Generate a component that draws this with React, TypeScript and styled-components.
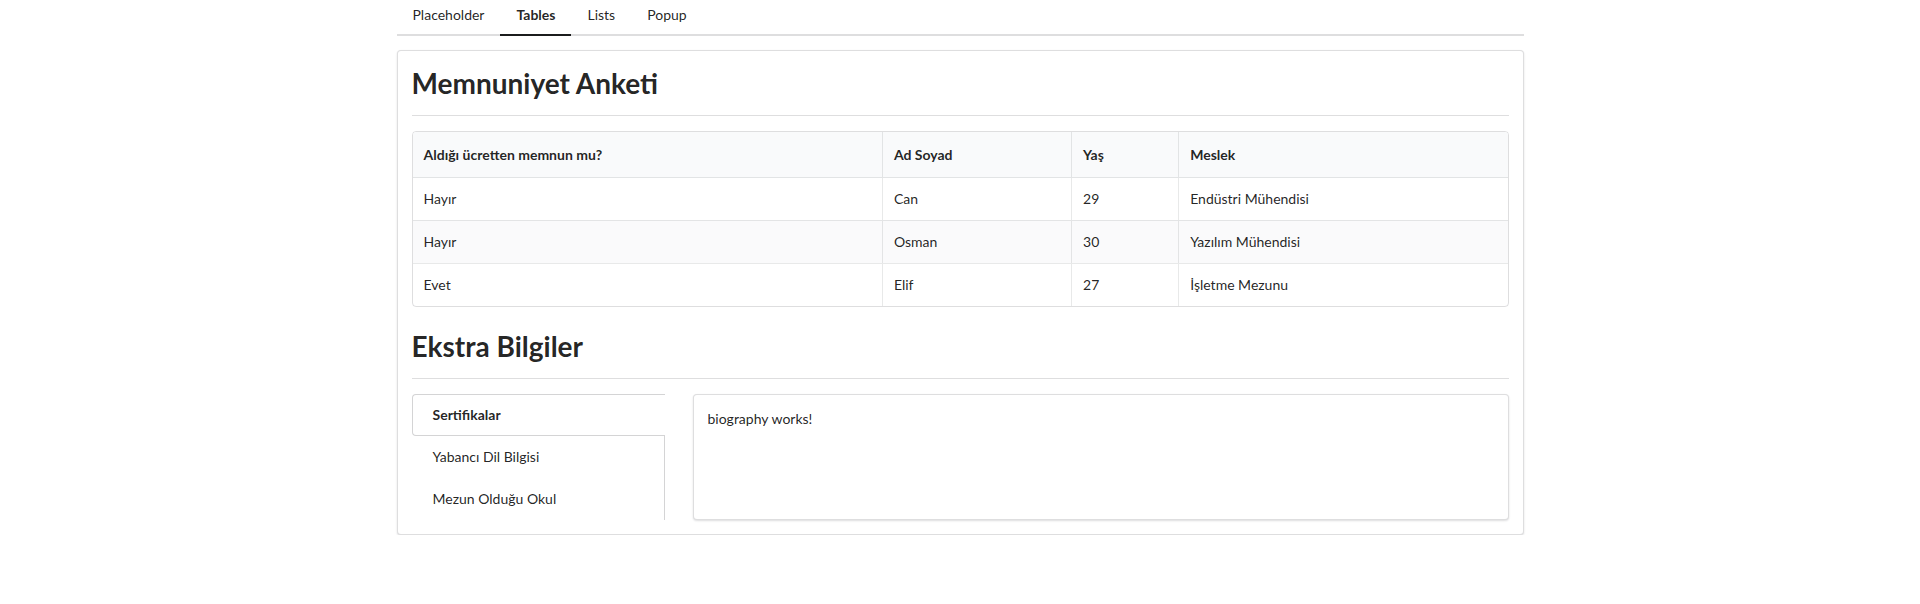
import React, { useState } from "react";
import styled, { createGlobalStyle } from "styled-components";

const GlobalStyle = createGlobalStyle`
  html, body {
    margin: 0;
    padding: 0;
    background: #ffffff;
  }
  body {
    font-family: Lato, "Helvetica Neue", Arial, sans-serif;
    font-size: 14px;
    line-height: 1.4285em;
    color: rgba(0, 0, 0, 0.87);
  }
`;

const Container = styled.div`
  width: 1127px;
  margin: 0 auto;
`;

const TabMenu = styled.div`
  display: flex;
  border-bottom: 2px solid rgba(34, 36, 38, 0.15);
`;

const TabItem = styled.div<{ $active?: boolean }>`
  padding: 8px 16px 12px;
  line-height: 1;
  margin-bottom: -2px;
  border-bottom: 2px solid ${(p) => (p.$active ? "#1b1c1d" : "transparent")};
  font-weight: ${(p) => (p.$active ? 700 : 400)};
  cursor: pointer;
`;

const Segment = styled.div`
  margin-top: 14px;
  padding: 14px;
  background: #fff;
  border: 1px solid rgba(34, 36, 38, 0.15);
  border-radius: 4px;
  box-shadow: 0 1px 2px 0 rgba(34, 36, 38, 0.15);
`;

const DividingHeader = styled.h1<{ $gap?: number }>`
  margin: ${(p) => p.$gap ?? 0}px 0 0;
  font-size: 28px;
  line-height: 36px;
  font-weight: 700;
  padding-bottom: 14px;
  border-bottom: 1px solid rgba(34, 36, 38, 0.15);
  color: rgba(0, 0, 0, 0.87);
`;

const Table = styled.table`
  width: 100%;
  margin-top: 15px;
  table-layout: fixed;
  border: 1px solid rgba(34, 36, 38, 0.15);
  border-radius: 4px;
  border-collapse: separate;
  border-spacing: 0;
  overflow: hidden;

  tbody tr + tr td {
    border-top: 1px solid rgba(34, 36, 38, 0.1);
  }
`;

const HeadCell = styled.th`
  padding: 13px 11px 12px;
  text-align: left;
  font-weight: 700;
  background: #f9fafb;
  border-bottom: 1px solid rgba(34, 36, 38, 0.1);
  & + & {
    border-left: 1px solid rgba(34, 36, 38, 0.1);
  }
`;

const Row = styled.tr<{ $striped?: boolean }>`
  background: ${(p) => (p.$striped ? "rgba(0, 0, 50, 0.02)" : "transparent")};
`;

const Cell = styled.td`
  padding: 11px;
  & + & {
    border-left: 1px solid rgba(34, 36, 38, 0.1);
  }
`;

const Grid = styled.div`
  display: grid;
  grid-template-columns: 253px 1fr;
  gap: 28px;
  margin-top: 15px;
`;

const VerticalMenu = styled.div`
  display: flex;
  flex-direction: column;
  border-right: 1px solid #d4d4d5;
`;

const VerticalItem = styled.div<{ $active?: boolean }>`
  padding: 13px 20px;
  line-height: 1;
  border: 1px solid ${(p) => (p.$active ? "#d4d4d5" : "transparent")};
  border-right: none;
  margin-right: ${(p) => (p.$active ? "-1px" : "0")};
  border-radius: 4px 0 0 4px;
  background: ${(p) => (p.$active ? "#fff" : "transparent")};
  font-weight: ${(p) => (p.$active ? 700 : 400)};
  cursor: pointer;
`;

const ContentSegment = styled.div`
  padding: 14px;
  background: #fff;
  border: 1px solid rgba(34, 36, 38, 0.15);
  border-radius: 4px;
  box-shadow: 0 1px 2px 0 rgba(34, 36, 38, 0.15);
`;

const tabs = ["Placeholder", "Tables", "Lists", "Popup"];

const columns = [
  { title: "Aldığı ücretten memnun mu?", width: 469 },
  { title: "Ad Soyad", width: 189 },
  { title: "Yaş", width: 107 },
  { title: "Meslek", width: 329 },
];

const rows = [
  ["Hayır", "Can", "29", "Endüstri Mühendisi"],
  ["Hayır", "Osman", "30", "Yazılım Mühendisi"],
  ["Evet", "Elif", "27", "İşletme Mezunu"],
];

const extraTabs = [
  { title: "Sertifikalar", body: "biography works!" },
  { title: "Yabancı Dil Bilgisi", body: "languages works!" },
  { title: "Mezun Olduğu Okul", body: "school works!" },
];

export default function App() {
  const [tab, setTab] = useState("Tables");
  const [extra, setExtra] = useState(0);

  return (
    <Container>
      <GlobalStyle />
      <TabMenu>
        {tabs.map((t) => (
          <TabItem key={t} $active={t === tab} onClick={() => setTab(t)}>
            {t}
          </TabItem>
        ))}
      </TabMenu>

      <Segment>
        <DividingHeader>Memnuniyet Anketi</DividingHeader>
        <Table>
          <colgroup>
            {columns.map((c) => (
              <col key={c.title} style={{ width: c.width }} />
            ))}
          </colgroup>
          <thead>
            <tr>
              {columns.map((c) => (
                <HeadCell key={c.title}>{c.title}</HeadCell>
              ))}
            </tr>
          </thead>
          <tbody>
            {rows.map((r, i) => (
              <Row key={i} $striped={i % 2 === 1}>
                {r.map((v, j) => (
                  <Cell key={j}>{v}</Cell>
                ))}
              </Row>
            ))}
          </tbody>
        </Table>

        <DividingHeader $gap={21}>Ekstra Bilgiler</DividingHeader>
        <Grid>
          <VerticalMenu>
            {extraTabs.map((t, i) => (
              <VerticalItem key={t.title} $active={i === extra} onClick={() => setExtra(i)}>
                {t.title}
              </VerticalItem>
            ))}
          </VerticalMenu>
          <ContentSegment>{extraTabs[extra].body}</ContentSegment>
        </Grid>
      </Segment>
    </Container>
  );
}
